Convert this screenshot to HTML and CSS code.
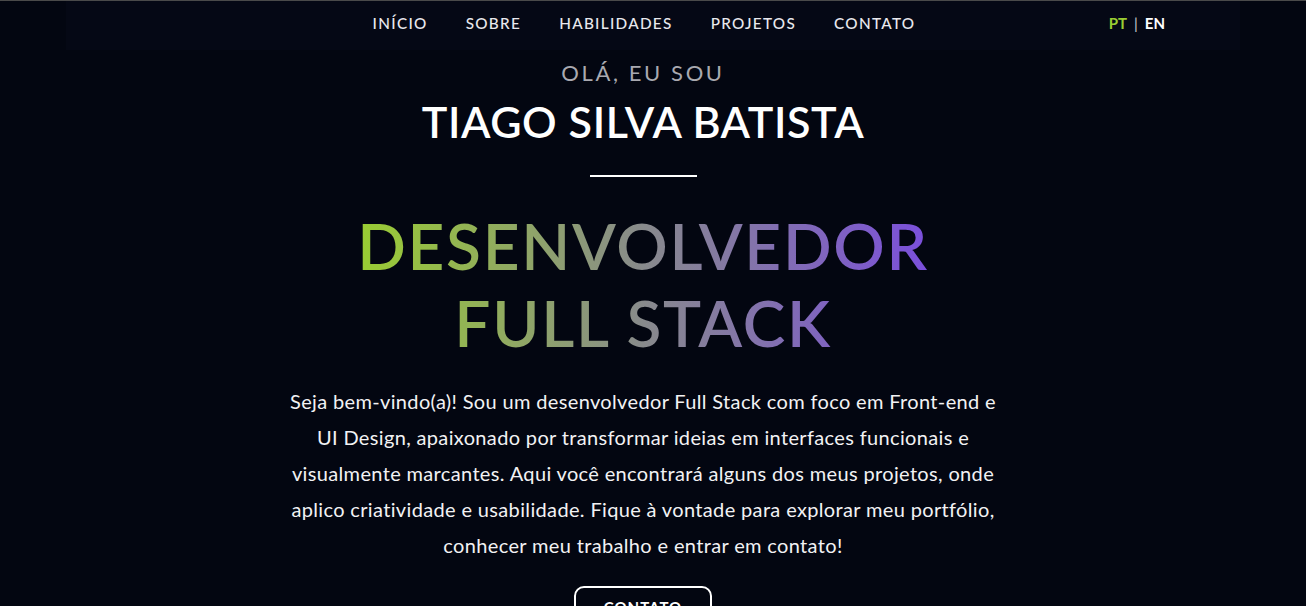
FILE: index.html
```html
<!DOCTYPE html>
<html lang="pt">
<head>
<meta charset="utf-8">
<title>Tiago Silva Batista</title>
<link rel="stylesheet" href="styles.css">
</head>
<body>
<header class="topbar">
  <nav class="nav">
    <ul class="nav-links">
      <li><a href="#">INÍCIO</a></li>
      <li><a href="#">SOBRE</a></li>
      <li><a href="#">HABILIDADES</a></li>
      <li><a href="#">PROJETOS</a></li>
      <li><a href="#">CONTATO</a></li>
    </ul>
    <div class="lang"><span class="lang-active">PT</span><span class="lang-sep">|</span><span>EN</span></div>
  </nav>
</header>
<main class="hero">
  <p class="hello">OLÁ, EU SOU</p>
  <h1 class="name">TIAGO SILVA BATISTA</h1>
  <div class="divider"></div>
  <h2 class="role">DESENVOLVEDOR<br>FULL STACK</h2>
  <p class="intro">Seja bem-vindo(a)! Sou um desenvolvedor Full Stack com foco em Front-end e UI Design, apaixonado por transformar ideias em interfaces funcionais e visualmente marcantes. Aqui você encontrará alguns dos meus projetos, onde aplico criatividade e usabilidade. Fique à vontade para explorar meu portfólio, conhecer meu trabalho e entrar em contato!</p>
  <a class="btn" href="#">CONTATO</a>
</main>
</body>
</html>
```
FILE: styles.css
```css
* { box-sizing: border-box; }
html, body { margin: 0; padding: 0; }
body {
  background: #030611;
  color: #fff;
  font-family: Lato, "Noto Sans", sans-serif;
  border-top: 1px solid #4a4a4a;
  height: 606px;
  overflow: hidden;
}
.topbar {
  display: flex;
  justify-content: center;
}
.nav {
  width: 1174px;
  height: 49px;
  background: #050815;
  position: relative;
  display: flex;
  align-items: flex-start;
  justify-content: center;
  padding-top: 12px;
}
.nav-links {
  list-style: none;
  margin: 0 18px 0 0;
  padding: 0;
  display: flex;
  gap: 38px;
}
.nav-links a {
  color: #e9e9ee;
  text-decoration: none;
  font-size: 15.3px;
  letter-spacing: 1.3px;
  font-weight: 500;
  line-height: 18px;
}
.lang {
  position: absolute;
  right: 75px;
  top: 13px;
  font-size: 15px;
  line-height: 18px;
  font-weight: 700;
  color: #fff;
  display: flex;
}
.lang-active { color: #9acd32; }
.lang-sep { color: #cfcfd4; font-weight: 400; margin: 0 7px; }
.hero {
  display: flex;
  flex-direction: column;
  align-items: center;
  text-align: center;
  padding-right: 20px;
}
.hello {
  margin: 9px 0 0;
  font-size: 22px;
  letter-spacing: 2.6px;
  color: #a9a9b0;
  font-weight: 400;
  line-height: 28px;
}
.name {
  margin: 10px 0 0;
  font-size: 43px;
  font-weight: 600;
  letter-spacing: 0.6px;
  line-height: 50px;
  color: #fff;
}
.divider {
  width: 107px;
  height: 2px;
  background: #fff;
  margin-top: 28px;
}
.role {
  margin: 30px 0 0;
  font-size: 64px;
  font-weight: 600;
  letter-spacing: 1.7px;
  line-height: 77px;
  background: linear-gradient(90deg, #9acd32, #888a8c 50%, #7b4fdc);
  -webkit-background-clip: text;
  background-clip: text;
  color: transparent;
}
.intro {
  max-width: 732px;
  margin: 22px 0 0;
  font-size: 20px;
  letter-spacing: 0.35px;
  line-height: 36px;
  color: #f2f2f4;
}
.btn {
  margin-top: 23px;
  display: inline-block;
  border: 2px solid #fff;
  border-radius: 10px;
  padding: 10px 28px;
  color: #fff;
  text-decoration: none;
  font-weight: 700;
  font-size: 15px;
  letter-spacing: 1px;
}
```
